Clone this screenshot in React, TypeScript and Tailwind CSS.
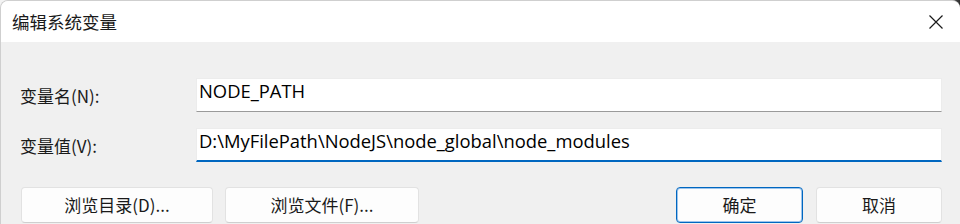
import React from 'react';

const font = { fontFamily: '"Noto Sans CJK SC", "Liberation Sans", sans-serif' };

function Field({ label, value, focused }: { label: string; value: string; focused?: boolean }) {
  return (
    <div className="flex items-center h-[34px]">
      <label className="w-[195px] pl-[19px] text-[17px] text-[#1a1a1a] leading-none">{label}</label>
      <div
        className={`flex-1 h-[34px] bg-white flex items-center pl-[2px] pb-[7px] border border-[#ececec] ${
          focused ? 'border-b-2 border-b-[#0067c0]' : 'border-b border-b-[#9a9a9a]'
        }`}
      >
        <span className="text-[18.4px] text-black leading-none" style={{ fontFamily: '"Open Sans", "Liberation Sans", sans-serif' }}>
          {value}
        </span>
      </div>
    </div>
  );
}

function Button({ children, primary, className }: { children: React.ReactNode; primary?: boolean; className: string }) {
  return (
    <button
      className={`h-[36px] rounded-[4px] bg-[#fdfdfd] text-[17px] text-[#1a1a1a] flex items-center justify-center ${
        primary ? 'border border-[#0067c0] shadow-[inset_0_0_0_1px_#9cc4ec]' : 'border border-[#e2e2e2] border-b-[#cfcfcf]'
      } ${className}`}
    >
      {children}
    </button>
  );
}

export default function App() {
  return (
    <div className="w-[960px] h-[224px] bg-[linear-gradient(90deg,#f3f3f3_96%,#2e2e2e_100%)]" style={font}>
      <div className="h-full bg-[#f0f0f0] rounded-t-[8px] border-l border-t border-[#cfcfcf] overflow-hidden flex flex-col">
        {/* Title bar */}
        <div className="h-[41px] bg-white flex items-center justify-between shrink-0">
          <span className="pl-[11px] text-[17.5px] text-[#1a1a1a] leading-none">编辑系统变量</span>
          <svg width="16" height="16" viewBox="0 0 16 16" className="mr-[16px]">
            <path d="M1.5 1.5L14.5 14.5M14.5 1.5L1.5 14.5" stroke="#1a1a1a" strokeWidth="1.2" fill="none" />
          </svg>
        </div>

        {/* Fields */}
        <div className="pr-[18px] pt-[36px] flex flex-col gap-[16px]">
          <Field label="变量名(N):" value="NODE_PATH" />
          <Field label="变量值(V):" value="D:\MyFilePath\NodeJS\node_global\node_modules" focused />
        </div>

        {/* Buttons */}
        <div className="flex items-center pl-[20px] pr-[18px] pt-[25px]">
          <Button className="w-[192px]">浏览目录(D)...</Button>
          <Button className="w-[194px] ml-[12px]">浏览文件(F)...</Button>
          <div className="flex-1" />
          <Button primary className="w-[127px]">确定</Button>
          <Button className="w-[126px] ml-[13px]">取消</Button>
        </div>
      </div>
    </div>
  );
}
